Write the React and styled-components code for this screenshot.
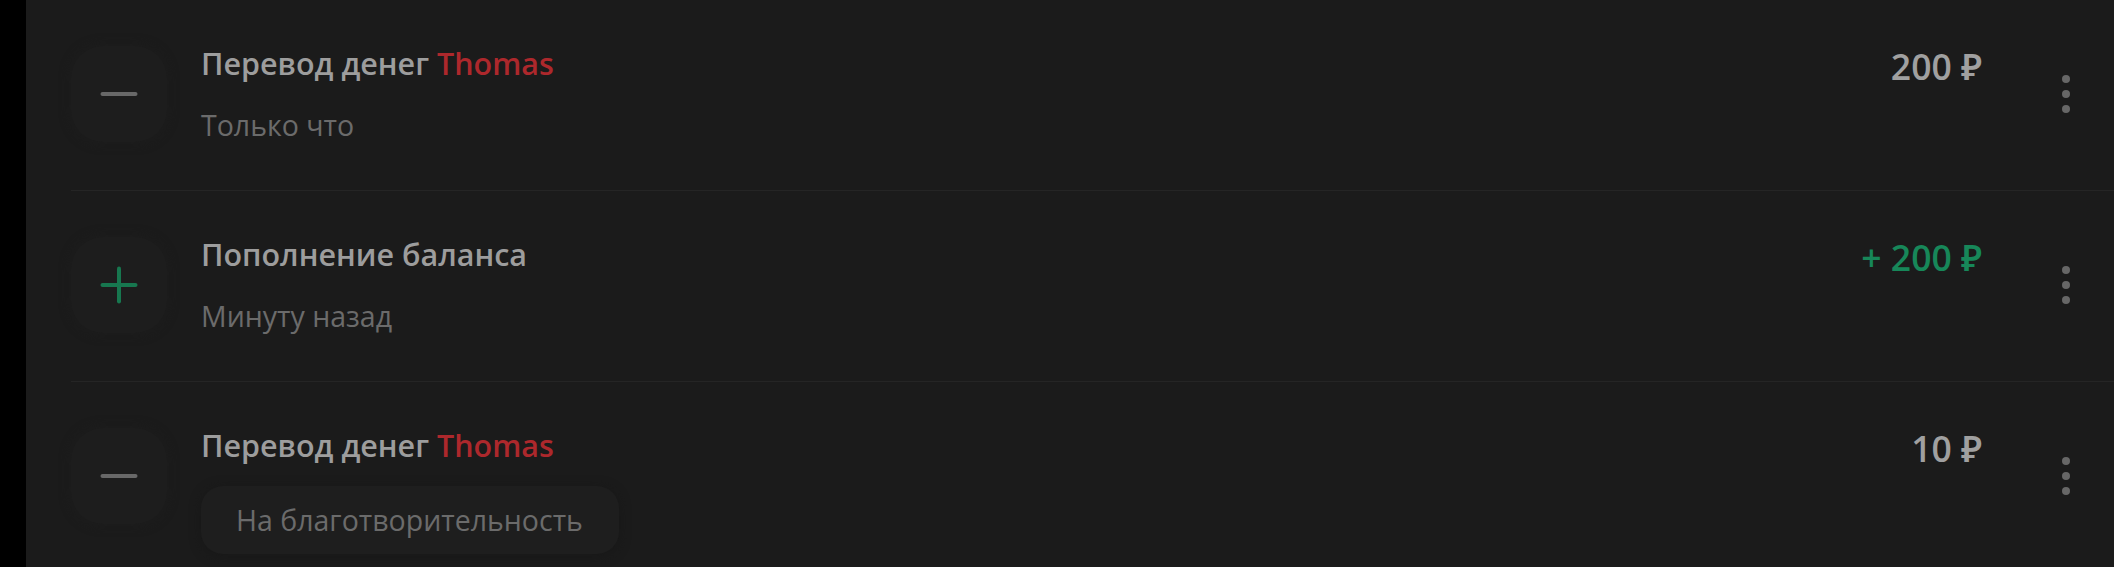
import React from "react";
import styled, { createGlobalStyle } from "styled-components";

const GlobalStyle = createGlobalStyle`
  html, body { margin: 0; padding: 0; background: #000; }
  body { font-family: "Open Sans", "Noto Sans", "DejaVu Sans", sans-serif; }
  * { box-sizing: border-box; }
`;

const Page = styled.div`
  display: flex;
  min-height: 567px;
  padding-left: 26px;
  background: #000;
`;

const Panel = styled.section`
  flex: 1;
  background: #1b1b1b;
  padding-left: 45px;
  overflow: hidden;
`;

const List = styled.ul`
  list-style: none;
  margin: 0;
  padding: 0;
`;

const Row = styled.li`
  display: flex;
  align-items: flex-start;
  min-height: 191px;
  padding: 42px 28px 0 0;
  border-bottom: 1px solid #252525;
`;

const IconBox = styled.div`
  flex: none;
  width: 96px;
  height: 96px;
  margin-top: 4px;
  border-radius: 32px;
  background: #1d1d1d;
  box-shadow: 0 0 10px 2px rgba(29, 29, 29, 0.9);
  position: relative;
`;

const Bar = styled.span`
  position: absolute;
  left: 50%;
  top: 50%;
  width: 37px;
  height: 4px;
  border-radius: 2px;
  background: ${(p) => p.$color};
  transform: translate(-50%, -50%) ${(p) => (p.$vertical ? "rotate(90deg)" : "")};
`;

const Info = styled.div`
  flex: 1;
  margin-left: 34px;
  display: flex;
  flex-direction: column;
  align-items: flex-start;
  gap: 20px;
`;

const Title = styled.div`
  font-size: 30.5px;
  line-height: 42px;
  font-weight: 600;
  color: #9d9d9d;
  white-space: nowrap;
`;

const Name = styled.span`
  color: #ad282c;
`;

const Sub = styled.div`
  font-size: 28.5px;
  line-height: 42px;
  font-weight: 400;
  color: #6b6b6b;
  white-space: nowrap;
`;

const Chip = styled.div`
  font-size: 28.5px;
  line-height: 42px;
  font-weight: 400;
  color: #6b6b6b;
  white-space: nowrap;
  padding: 13px 36px 13px 35px;
  border-radius: 22px;
  background: #1e1e1e;
  box-shadow: 0 2px 10px 2px rgba(24, 24, 24, 0.9);
`;

const Amount = styled.div`
  flex: none;
  font-size: 35.5px;
  line-height: 49px;
  font-weight: 600;
  color: ${(p) => (p.$income ? "#178759" : "#a0a0a0")};
  white-space: nowrap;
  margin-right: 64px;
`;

const More = styled.button`
  flex: none;
  width: 40px;
  margin-top: 33px;
  padding: 0;
  border: 0;
  background: transparent;
  display: flex;
  flex-direction: column;
  align-items: center;
  gap: 7px;
  cursor: pointer;
`;

const Dot = styled.span`
  width: 8px;
  height: 8px;
  border-radius: 50%;
  background: #676767;
`;

const items = [
  { type: "out", title: "Перевод денег", name: "Thomas", sub: "Только что", amount: "200 ₽" },
  { type: "in", title: "Пополнение баланса", sub: "Минуту назад", amount: "+ 200 ₽" },
  { type: "out", title: "Перевод денег", name: "Thomas", chip: "На благотворительность", amount: "10 ₽" },
];

export default function App() {
  return (
    <>
      <GlobalStyle />
      <Page>
        <Panel>
          <List>
            {items.map((it, i) => (
              <Row key={i}>
                <IconBox>
                  {it.type === "in" ? (
                    <>
                      <Bar $color="#17774f" />
                      <Bar $color="#17774f" $vertical />
                    </>
                  ) : (
                    <Bar $color="#686868" />
                  )}
                </IconBox>
                <Info>
                  <Title>
                    {it.title}
                    {it.name && (
                      <>
                        {" "}
                        <Name>{it.name}</Name>
                      </>
                    )}
                  </Title>
                  {it.sub && <Sub>{it.sub}</Sub>}
                  {it.chip && <Chip>{it.chip}</Chip>}
                </Info>
                <Amount $income={it.type === "in"}>{it.amount}</Amount>
                <More aria-label="Ещё">
                  <Dot />
                  <Dot />
                  <Dot />
                </More>
              </Row>
            ))}
          </List>
        </Panel>
      </Page>
    </>
  );
}
